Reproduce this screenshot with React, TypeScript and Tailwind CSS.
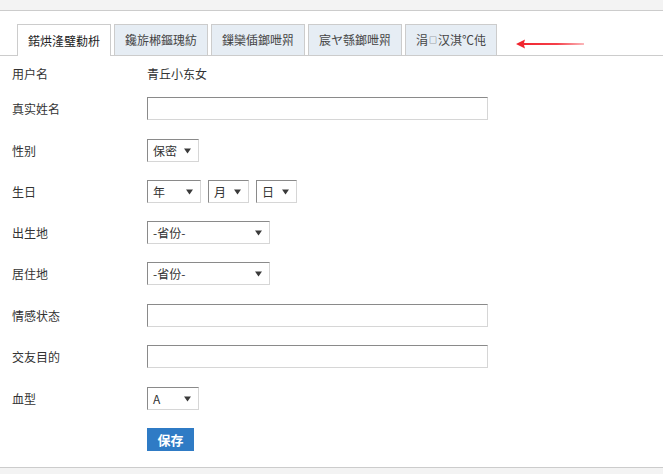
import React from "react";

const font = { fontFamily: '"Noto Sans CJK SC", "Noto Sans", sans-serif' };

function Arrow() {
  return (
    <svg width="7" height="6" viewBox="0 0 7 6" className="shrink-0">
      <polygon points="0,0.5 7,0.5 3.5,5.5" fill="#3a3a3a" />
    </svg>
  );
}

function Sel({ w, text }: { w: string; text: string }) {
  return (
    <div
      className={`${w} h-[23px] flex items-center justify-between pl-[5px] pr-[7px] border border-t-[#8a8a8a] border-l-[#8a8a8a] border-r-[#d6d6d6] border-b-[#d6d6d6] bg-white text-[12px] text-[#333]`}
    >
      <span>{text}</span>
      <Arrow />
    </div>
  );
}

function Inp() {
  return (
    <div className="w-[341px] h-[23px] border border-t-[#8a8a8a] border-l-[#8a8a8a] border-r-[#d6d6d6] border-b-[#d6d6d6] bg-white" />
  );
}

function Row({ label, mt, children }: { label: string; mt: string; children: React.ReactNode }) {
  return (
    <div className={`flex items-center h-[23px] ${mt}`}>
      <div className="w-[135px] text-[12px] text-[#333]">{label}</div>
      {children}
    </div>
  );
}

export default function App() {
  return (
    <div className="w-[663px] h-[474px] bg-white flex flex-col overflow-hidden" style={font}>
      <div className="h-[11px] bg-[#f3f3f3] border-b border-[#cccccc]" />
      <div className="flex-1 flex flex-col">
        <div className="flex items-stretch pl-[17px] pt-[13px] border-b border-[#cccccc]">
          <div className="h-[32px] px-[10px] flex items-center bg-white border border-b-0 border-[#cccccc] mb-[-1px] text-[12px] text-[#222]">
            鍩烘湰璧勬枡
          </div>
          <div className="ml-[3px] h-[31px] px-[10px] flex items-center bg-[#e6edf4] border border-b-0 border-[#cccccc] text-[12px] text-[#444]">
            鑱旂郴鏂瑰紡
          </div>
          <div className="ml-[3px] h-[31px] px-[10px] flex items-center bg-[#e6edf4] border border-b-0 border-[#cccccc] text-[12px] text-[#444]">
            鏁欒偛鎯呭喌
          </div>
          <div className="ml-[3px] h-[31px] px-[10px] flex items-center bg-[#e6edf4] border border-b-0 border-[#cccccc] text-[12px] text-[#444]">
            宸ヤ綔鎯呭喌
          </div>
          <div className="ml-[3px] h-[31px] px-[10px] flex items-center bg-[#e6edf4] border border-b-0 border-[#cccccc] text-[12px] text-[#444]">
            涓<span className="text-[8px] mx-[1px]">□</span>汉淇℃伅
          </div>
          <div className="ml-[19px] self-end mb-[6px]">
            <svg width="68" height="10" viewBox="0 0 68 10">
              <defs>
                <linearGradient id="g" x1="0" x2="1" y1="0" y2="0">
                  <stop offset="0" stopColor="#f0202a" />
                  <stop offset="0.6" stopColor="#f5404a" />
                  <stop offset="1" stopColor="#fbb8bb" />
                </linearGradient>
              </defs>
              <polygon points="0,5 9,0.5 8,4 68,4 68,6 8,6 9,9.5" fill="url(#g)" />
            </svg>
          </div>
        </div>

        <div className="pl-[12px] flex flex-col">
          <div className="flex items-center h-[20px] mt-[8px]">
            <div className="w-[135px] text-[12px] text-[#333]">用户名</div>
            <div className="text-[12px] text-[#333]">青丘小东女</div>
          </div>
          <Row label="真实姓名" mt="mt-[13px]">
            <Inp />
          </Row>
          <Row label="性别" mt="mt-[19px]">
            <Sel w="w-[52px]" text="保密" />
          </Row>
          <Row label="生日" mt="mt-[18px]">
            <div className="flex gap-[7px]">
              <Sel w="w-[54px]" text="年" />
              <Sel w="w-[41px]" text="月" />
              <Sel w="w-[41px]" text="日" />
            </div>
          </Row>
          <Row label="出生地" mt="mt-[18px]">
            <Sel w="w-[123px]" text="-省份-" />
          </Row>
          <Row label="居住地" mt="mt-[18px]">
            <Sel w="w-[123px]" text="-省份-" />
          </Row>
          <Row label="情感状态" mt="mt-[19px]">
            <Inp />
          </Row>
          <Row label="交友目的" mt="mt-[18px]">
            <Inp />
          </Row>
          <Row label="血型" mt="mt-[19px]">
            <Sel w="w-[52px]" text="A" />
          </Row>
          <div className="flex h-[23px] mt-[18px]">
            <div className="w-[135px]" />
            <button className="w-[47px] h-[23px] bg-[#2f7bc5] text-white text-[13px] font-bold flex items-center justify-center">
              保存
            </button>
          </div>
        </div>
      </div>
      <div className="h-[7px] bg-[#f3f3f3] border-t border-[#cccccc]" />
    </div>
  );
}
